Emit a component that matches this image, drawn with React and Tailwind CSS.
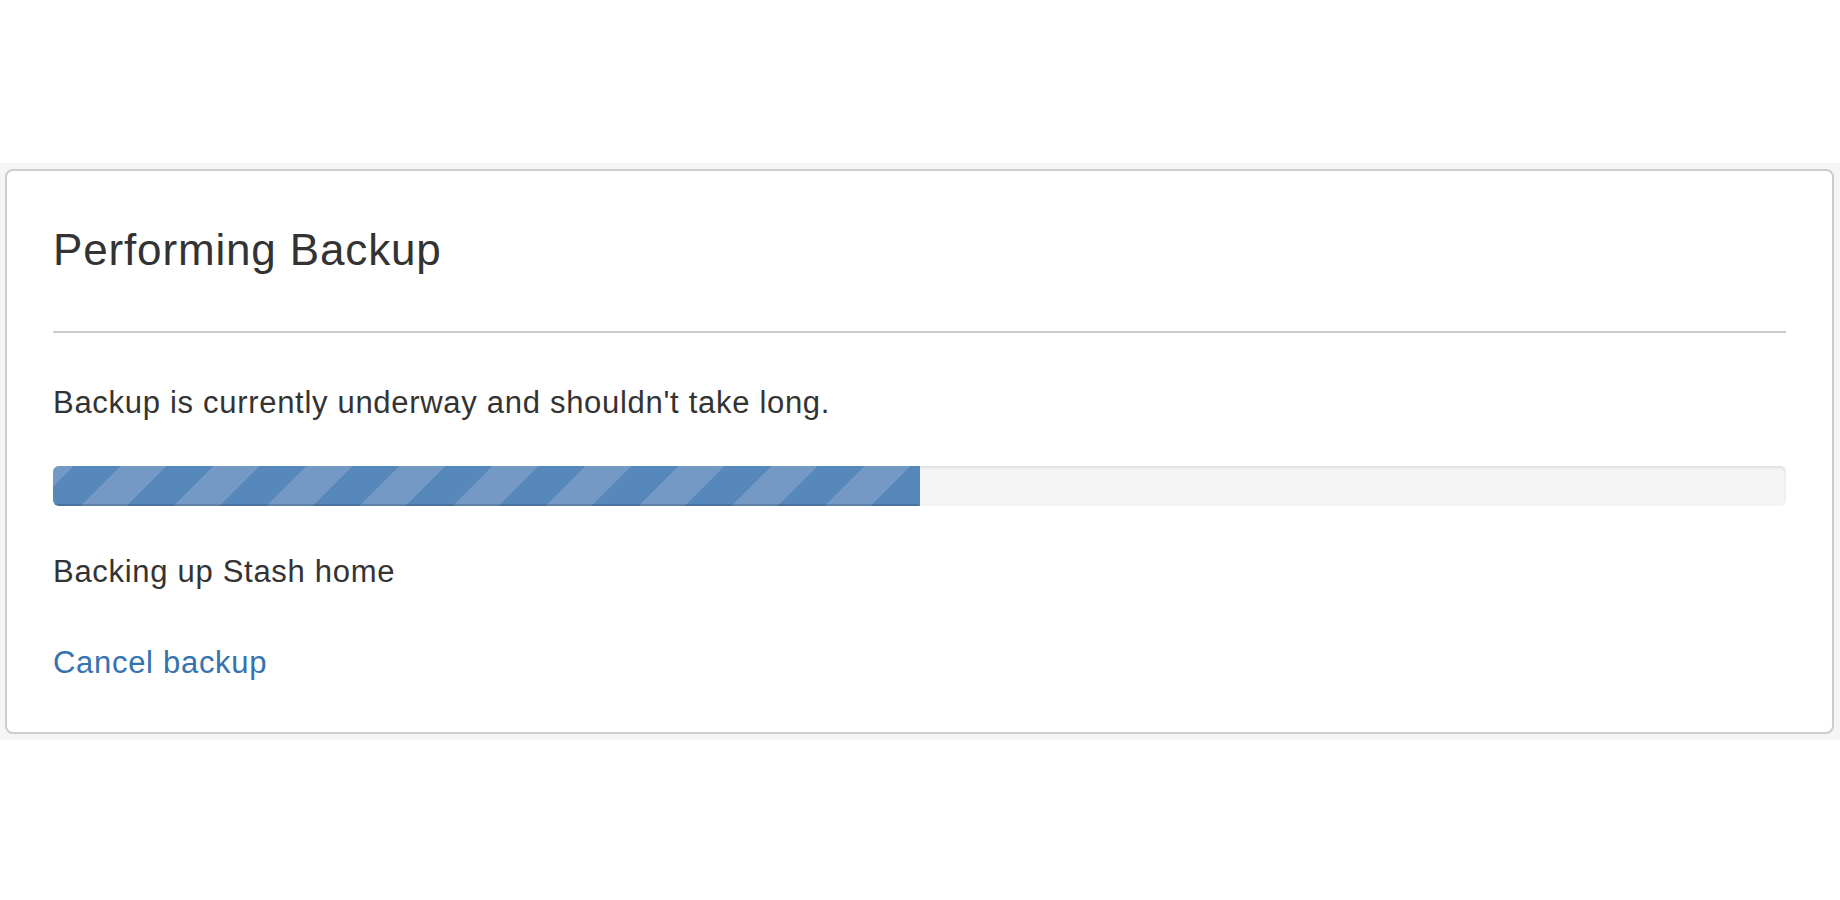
import React from "react";

export default function App() {
  const progress = 50;
  return (
    <div className="min-h-[900px] w-full bg-white pt-[163px] font-['Liberation_Sans',Arial,sans-serif] text-[#333333]">
      <div className="bg-[#f5f5f5] pl-[5px] pr-[6px] py-[6px]">
        <div className="rounded-[8px] border-2 border-[#cccccc] bg-white px-[46px] pt-[53px] pb-[49px]">
          <h1 className="text-[44px] leading-[52px] tracking-[0.85px] font-normal">
            Performing Backup
          </h1>
          <div className="mt-[55px] h-[2px] bg-[#cccccc]" />
          <p className="mt-[50px] text-[31px] leading-[40px] tracking-[0.7px]">
            Backup is currently underway and shouldn't take long.
          </p>
          <div className="mt-[43px] h-[40px] w-full overflow-hidden rounded-[6px] bg-[#f5f5f5] shadow-[inset_0_2px_3px_rgba(0,0,0,0.1)]">
            <div
              className="h-full bg-[linear-gradient(135deg,#7399c4_25%,#5688bb_25%,#5688bb_50%,#7399c4_50%,#7399c4_75%,#5688bb_75%)] bg-size-[93px_93px] bg-position-[-26px_0] shadow-[inset_0_-2px_0_rgba(0,0,0,0.15)]"
              style={{ width: `${progress}%` }}
            />
          </div>
          <p className="mt-[46px] text-[31px] leading-[40px] tracking-[0.7px]">
            Backing up Stash home
          </p>
          <a
            href="#"
            className="mt-[51px] block w-fit text-[31px] leading-[40px] tracking-[0.7px] text-[#3572b0]"
          >
            Cancel backup
          </a>
        </div>
      </div>
    </div>
  );
}
